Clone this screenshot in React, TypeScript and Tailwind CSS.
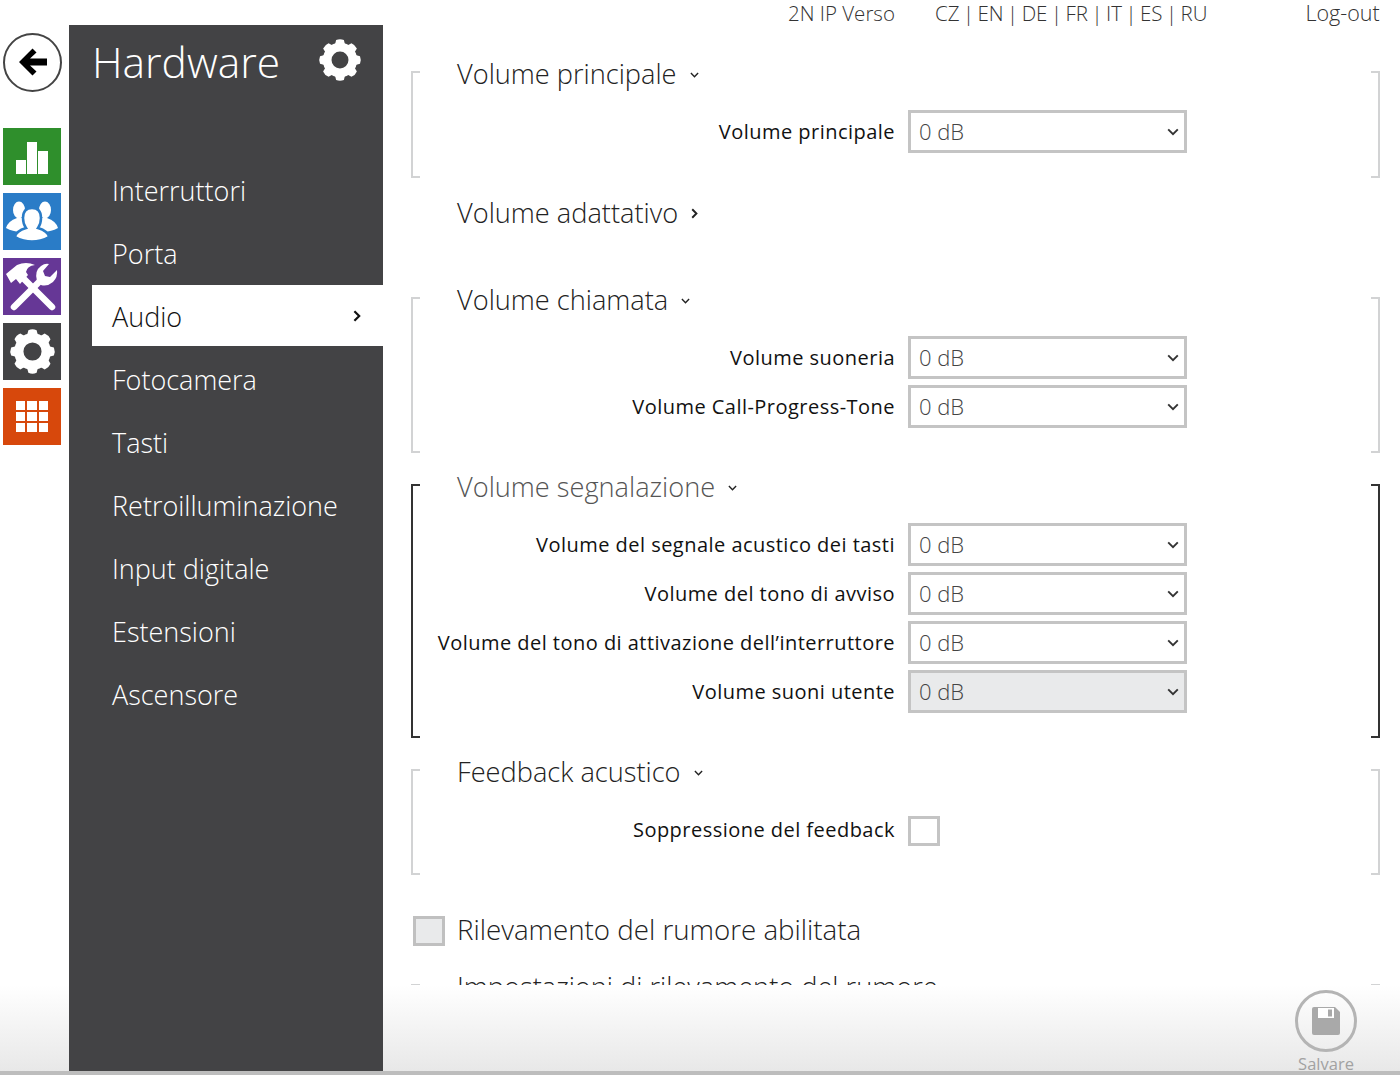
import React from "react";

const font = { fontFamily: '"Open Sans", "Noto Sans", sans-serif' };

function Gear({ size, fill }: { size: number; fill: string }) {
  const angles = [0, 45, 90, 135, 180, 225, 270, 315];
  return (
    <svg width={size} height={size} viewBox="0 0 48 48">
      <circle cx="24" cy="24" r="14" fill="none" stroke={fill} strokeWidth="9.5" />
      {angles.map((a) => (
        <path key={a} d="M17.5 11 L19.8 2.2 Q24 0.4 28.2 2.2 L30.5 11 Z" fill={fill} transform={`rotate(${a} 24 24)`} />
      ))}
    </svg>
  );
}

function ChevronDown({ className }: { className: string }) {
  return (
    <svg className={className} viewBox="0 0 12 8" fill="none" stroke="currentColor" strokeWidth="1.9">
      <path d="M1.2 1.4 L6 6.2 L10.8 1.4" />
    </svg>
  );
}

function ChevronRight({ className }: { className: string }) {
  return (
    <svg className={className} viewBox="0 0 8 12" fill="none" stroke="currentColor" strokeWidth="2.2">
      <path d="M1.4 1.2 L6.2 6 L1.4 10.8" />
    </svg>
  );
}

function RailTile({ bg, children }: { bg: string; children: React.ReactNode }) {
  return <div className={`w-[58px] h-[57px] flex items-center justify-center ${bg}`}>{children}</div>;
}

function Select({ disabled }: { disabled?: boolean }) {
  return (
    <div
      className={`w-[279px] h-[43px] border-[3px] border-[#c4c4c4] flex items-center justify-between pl-[8px] pr-[5px] text-[22px] font-light text-[#444] ${
        disabled ? "bg-[#e9eaeb]" : "bg-white"
      }`}
    >
      <span>0 dB</span>
      <ChevronDown className="w-[12px] h-[8px] text-[#333]" />
    </div>
  );
}

function Row({ label, lift, children }: { label: string; lift?: boolean; children: React.ReactNode }) {
  return (
    <div className="flex items-center">
      <div className={`w-[484px] text-right text-[20px] leading-[26px] text-[#111] tracking-[0.47px] whitespace-nowrap ${lift ? "pb-[3px]" : ""}`}>{label}</div>
      <div className="ml-[13px]">{children}</div>
    </div>
  );
}

function Brackets({ active }: { active?: boolean }) {
  const c = active ? "border-[#333]" : "border-[#d2d3d4]";
  return (
    <>
      <div className={`absolute left-0 top-0 bottom-0 w-[9px] border-l-[2px] border-y-[2px] ${c}`} />
      <div className={`absolute right-0 top-0 bottom-0 w-[9px] border-r-[2px] border-y-[2px] ${c}`} />
    </>
  );
}

function Heading({ text, muted, right }: { text: string; muted?: boolean; right?: boolean }) {
  return (
    <div className={`-mt-[17px] pl-[46px] h-[40px] flex items-center gap-[13px] text-[27.2px] font-light whitespace-nowrap ${muted ? "text-[#555]" : "text-[#222]"}`}>
      <span>{text}</span>
      {right ? <ChevronRight className="w-[7px] h-[11px] text-[#222] mt-[1px]" /> : <ChevronDown className="w-[9px] h-[6px] text-[#222] mt-[2px]" />}
    </div>
  );
}

function Section({ title, rows, active, muted, mb }: { title: string; rows: { label: string; disabled?: boolean }[]; active?: boolean; muted?: boolean; mb: string }) {
  return (
    <section className={`relative flow-root w-[969px] ${mb}`}>
      <Brackets active={active} />
      <Heading text={title} muted={muted} />
      <div className="mt-[16px] pb-[25px] flex flex-col gap-[6px]">
        {rows.map((r) => (
          <Row key={r.label} label={r.label}>
            <Select disabled={r.disabled} />
          </Row>
        ))}
      </div>
    </section>
  );
}

const menu = ["Interruttori", "Porta", "Audio", "Fotocamera", "Tasti", "Retroilluminazione", "Input digitale", "Estensioni", "Ascensore"];

export default function App() {
  return (
    <div
      style={font}
      className="w-[1400px] h-[1075px] overflow-hidden flex flex-col bg-[linear-gradient(to_bottom,#ffffff_985px,#e8e8e8_1071px)]"
    >
      <div className="h-[1071px] flex">
        {/* Rail */}
        <div className="w-[69px] pl-[3px] flex flex-col shrink-0">
          <div className="mt-[33px] w-[59px] h-[59px] rounded-full border-[2px] border-[#444] bg-white flex items-center justify-center">
            <svg width="31" height="31" viewBox="0 0 31 31">
              <path d="M15.5 1.5 L2 15 L15.5 28.5 L19.5 24.5 L13 18.5 L30 18.5 L30 11.5 L13 11.5 L19.5 5.5 Z" fill="#000" />
            </svg>
          </div>
          <div className="mt-[36px] flex flex-col gap-[8px]">
            <RailTile bg="bg-[#2f8f2c]">
              <svg width="58" height="57" viewBox="0 0 58 57" fill="#fff">
                <rect x="13" y="32" width="10" height="14" />
                <rect x="24" y="14" width="10" height="32" />
                <rect x="35" y="23" width="10" height="23" />
              </svg>
            </RailTile>
            <RailTile bg="bg-[#2a7cc7]">
              <svg width="58" height="57" viewBox="0 0 58 57">
                <g fill="#fff">
                  <ellipse cx="16" cy="17" rx="6" ry="8.5" />
                  <path d="M3 35 Q5 28 14 25 L19 25 Q26 28 28 36 Q16 42 3 35 Z" />
                  <ellipse cx="42" cy="17" rx="6" ry="8.5" />
                  <path d="M55 35 Q53 28 44 25 L39 25 Q32 28 30 36 Q42 42 55 35 Z" />
                </g>
                <g fill="#fff" stroke="#2a7cc7" strokeWidth="2.5">
                  <path d="M12 44 Q13 38 23 35 Q20 31 20 25 Q20 15 29 15 Q38 15 38 25 Q38 31 35 35 Q45 38 46 44 Q29 53 12 44 Z" />
                </g>
              </svg>
            </RailTile>
            <RailTile bg="bg-[#663796]">
              <svg width="58" height="57" viewBox="0 0 58 57">
                <path d="M21 21 L49 49" stroke="#fff" strokeWidth="6.5" strokeLinecap="round" />
                <path d="M3 16 L14 7 Q23 3 32 7 Q24 8 23 14 L25 17 L17 26 L13 21 L8 25 Z" fill="#fff" />
                <path d="M11 49 L37 23" stroke="#fff" strokeWidth="6.5" strokeLinecap="round" />
                <path d="M34 23 Q31 13 38 8 Q42 5 46 6 L40 13 L42 18 L47 19 L54 12 Q55 19 50 24 Q44 29 38 27 Z" fill="#fff" />
              </svg>
            </RailTile>
            <RailTile bg="bg-[#434345]">
              <Gear size={47} fill="#ffffff" />
            </RailTile>
            <RailTile bg="bg-[#d7480c]">
              <div className="grid grid-cols-3 gap-[2px] w-[32px]">
                {Array.from({ length: 9 }).map((_, i) => (
                  <div key={i} className="h-[9px] bg-white" />
                ))}
              </div>
            </RailTile>
          </div>
        </div>

        {/* Sidebar */}
        <aside className="w-[314px] h-[1046px] mt-[25px] bg-[#434345] shrink-0 text-white flex flex-col">
          <div className="h-[134px] pl-[23px] pr-[21px] pt-[9px] flex items-start justify-between">
            <span className="text-[42.5px] leading-[56px] font-light">Hardware</span>
            <div className="mt-[4px]"><Gear size={44} fill="#ffffff" /></div>
          </div>
          <nav className="ml-[23px] flex flex-col gap-[2px]">
            {menu.map((m) => (
              <div
                key={m}
                className={`h-[61px] pl-[20px] pr-[22px] flex items-center justify-between text-[27px] font-light ${m === "Audio" ? "bg-white text-[#111]" : "text-white"}`}
              >
                <span className="mt-[3px]">{m}</span>
                {m === "Audio" && <ChevronRight className="w-[8px] h-[12px] text-[#111]" />}
              </div>
            ))}
          </nav>
        </aside>

        {/* Main */}
        <main className="flex-1 flex flex-col min-w-0">
          <header className="h-[27px] -mb-[2px] flex items-center text-[20.5px] font-light text-[#333] whitespace-nowrap pl-[405px]">
            <span>2N IP Verso</span>
            <span className="ml-[40px] [word-spacing:-1.85px]">CZ | EN | DE | FR | IT | ES | RU</span>
            <span className="ml-[98px] text-[21.5px]">Log-out</span>
          </header>
          <div className="h-[960px] overflow-hidden pt-[46px] pl-[28px]">
            <Section title="Volume principale" rows={[{ label: "Volume principale" }]} mb="mb-[32px]" />
            <div className="flow-root h-[56px] mb-[31px]">
              <Heading text="Volume adattativo" right />
            </div>
            <Section title="Volume chiamata" rows={[{ label: "Volume suoneria" }, { label: "Volume Call-Progress-Tone" }]} mb="mb-[31px]" />
            <Section
              title="Volume segnalazione"
              active
              muted
              rows={[
                { label: "Volume del segnale acustico dei tasti" },
                { label: "Volume del tono di avviso" },
                { label: "Volume del tono di attivazione dell’interruttore" },
                { label: "Volume suoni utente", disabled: true },
              ]}
              mb="mb-[31px]"
            />
            <section className="relative flow-root w-[969px] h-[106px] mb-[41px]">
              <Brackets />
              <Heading text="Feedback acustico" />
              <div className="mt-[24px]">
                <Row label="Soppressione del feedback" lift>
                  <div className="w-[32px] h-[30px] border-[3px] border-[#c4c4c4] bg-white" />
                </Row>
              </div>
            </section>
            <div className="h-[30px] mb-[38px] flex items-center text-[27.7px] font-light text-[#222] pl-[2px]">
              <div className="w-[32px] h-[30px] border-[3px] border-[#c0c0c0] bg-[#e9eaeb]" />
              <span className="ml-[12px] -mt-[2px]">Rilevamento del rumore abilitata</span>
            </div>
            <section className="relative flow-root w-[969px] h-[100px]">
              <Brackets />
              <Heading text="Impostazioni di rilevamento del rumore" />
            </section>
          </div>
          <footer className="flex-1 overflow-hidden flex justify-end pr-[34px]">
            <div className="w-[80px] flex flex-col items-center pt-[5px]">
              <div className="shrink-0 w-[62px] h-[62px] rounded-full border-[3px] border-[#b4b4b4] flex items-center justify-center">
                <svg width="28" height="28" viewBox="0 0 28 28">
                  <path d="M2 0 H23 L28 5 V26 Q28 28 26 28 H2 Q0 28 0 26 V2 Q0 0 2 0 Z" fill="#a9a9a9" />
                  <rect x="6" y="1" width="16" height="10" fill="#fff" />
                  <rect x="16" y="2.5" width="4" height="7" fill="#a9a9a9" />
                </svg>
              </div>
              <span className="shrink-0 mt-[1px] text-[16.5px] leading-[22px] text-[#a2a2a2]">Salvare</span>
            </div>
          </footer>
        </main>
      </div>
      <div className="h-[4px] bg-[#bdbdbd]" />
    </div>
  );
}
